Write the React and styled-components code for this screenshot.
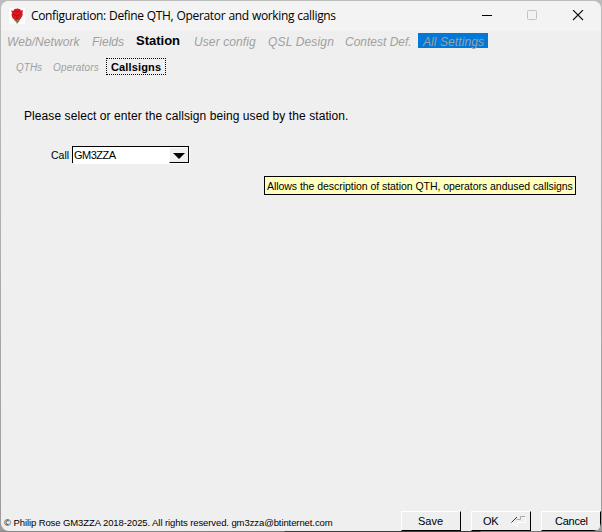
import React from "react";
import styled, { createGlobalStyle } from "styled-components";

const Global = createGlobalStyle`
  * { box-sizing: border-box; }
  html, body { margin: 0; padding: 0; overflow: hidden; background: #b4b4b4; }
`;

const Desktop = styled.div`
  width: 602px;
  height: 532px;
  padding: 1px;
  background:
    linear-gradient(90deg, #888 0 160px, #777 284px, #3c3c3c 285px 480px, #777 481px) 0 100% / 100% 1px no-repeat,
    linear-gradient(#bcbcbc 0, #b0b0b0 40%, #9b9b9b 100%);
  font-family: "Liberation Sans", Arial, sans-serif;
  color: #000;
`;

const Window = styled.main`
  width: 600px;
  height: 530px;
  display: flex;
  flex-direction: column;
  background: #efefef;
  border-radius: 8px;
  overflow: hidden;
`;

const TitleBar = styled.header`
  height: 30px;
  flex: none;
  display: flex;
  align-items: center;
  padding-left: 8px;
  background: #f3f3f3;
`;

const AppIcon = styled.svg`
  width: 16px;
  height: 16px;
  flex: none;
`;

const Title = styled.h1`
  margin: 0 0 0 6px;
  flex: 1;
  font: 400 12px/18px "Open Sans", "Noto Sans", sans-serif;
  letter-spacing: ${(p) => p.$spacing}px;
  word-spacing: 0.4px;
  white-space: nowrap;
`;

const Caption = styled.button`
  width: 45px;
  height: 30px;
  padding: 0;
  border: 0;
  background: transparent;
  display: flex;
  align-items: center;
  justify-content: center;
`;

const Captions = styled.div`
  display: flex;
  margin-right: 1px;
`;

const Tabs = styled.nav`
  display: flex;
  flex: none;
  height: ${(p) => p.$height}px;
  padding: 2px 0 0 ${(p) => p.$indent}px;
`;

const Tab = styled.button`
  flex: none;
  width: ${(p) => p.$width}px;
  height: 15px;
  padding: ${(p) => (p.$active ? 0 : 2)}px 0 0 ${(p) => p.$pad || 0}px;
  border: 0;
  background: ${(p) => (p.$selected ? "#0078d7" : "transparent")};
  color: ${(p) => (p.$active ? "#000" : "#a0a0a0")};
  font: ${(p) => (p.$active ? "normal 700" : "italic 400")} ${(p) => p.$size || 12}px/15px "Liberation Sans", Arial, sans-serif;
  letter-spacing: ${(p) => p.$spacing || 0}px;
  text-align: left;
  white-space: nowrap;
`;

const SubTab = styled(Tab)`
  height: 17px;
  padding-top: 2px;
  line-height: 15px;
  ${(p) => p.$active && "outline: 1px dotted #000; outline-offset: -1px;"}
`;

const Content = styled.section`
  flex: 1;
  padding: 26px 0 0 23px;
`;

const Prompt = styled.p`
  margin: 0;
  font-size: 12px;
  line-height: 16px;
  letter-spacing: ${(p) => p.$spacing}px;
  white-space: nowrap;
`;

const Field = styled.label`
  display: flex;
  margin: 22px 0 0 27px;
`;

const FieldName = styled.span`
  width: 21px;
  font-size: 10.5px;
  line-height: 19px;
`;

const Combo = styled.span`
  display: flex;
  width: 117px;
  height: 17px;
  border: 1px solid #000;
  border-bottom: 0;
  background: #fff;
  box-shadow: 1px 1px 0 #fff;
`;

const ComboValue = styled.span`
  flex: 1;
  padding-left: 1px;
  font-size: 11px;
  line-height: 17px;
  letter-spacing: ${(p) => p.$spacing}px;
`;

const ComboArrow = styled.span`
  width: 19px;
  height: 16px;
  display: flex;
  align-items: center;
  justify-content: center;
  padding-top: 1px;
  background: #efefef;
  border-top: 1px solid #fff;
  border-left: 1px solid #fff;
  border-bottom: 1px solid #000;
`;

const Tooltip = styled.div`
  position: absolute;
  left: 264px;
  top: 176px;
  width: 312px;
  height: 19px;
  padding-left: 2px;
  border: 1px solid #000;
  background: #ffffbf;
  font-size: 10.5px;
  line-height: 19px;
  letter-spacing: ${(p) => p.$spacing}px;
  white-space: nowrap;
`;

const Footer = styled.footer`
  flex: none;
  height: 20px;
  display: flex;
  justify-content: space-between;
`;

const Copyright = styled.span`
  padding: 5px 0 0 3px;
  font-size: 9.5px;
  line-height: 14px;
  letter-spacing: ${(p) => p.$spacing}px;
  white-space: nowrap;
`;

const Actions = styled.div`
  display: flex;
  gap: 10px;
`;

const Action = styled.button`
  width: 60px;
  height: 20px;
  padding: 0 0 0 ${(p) => p.$pad}px;
  display: flex;
  align-items: center;
  border: 0;
  border-top: 1px solid #fff;
  border-left: 1px solid #fff;
  border-right: 1px solid #000;
  border-bottom: 1px solid #000;
  background: #efefef;
  color: #000;
  font: 11px/18px "Liberation Sans", Arial, sans-serif;
  letter-spacing: ${(p) => p.$spacing || 0}px;
`;

const ReturnMark = styled.svg`
  width: 18px;
  height: 12px;
  flex: none;
  margin: 0 0 0 11px;
`;

const RoseIcon = () => (
  <AppIcon viewBox="0 0 16 16">
    <rect width="16" height="16" fill="#fff" />
    <path d="M8 11v4.5M8 14.5l2.5-2M8 13.5l-2.5-1" stroke="#55852f" strokeWidth="1.2" fill="none" />
    <path d="M2 2.5L4.5 2.7 5.5 1 8.5.5l2.5.5.7 1.5 2.3-.2-.5 2.5.2 2.5-2 3.5-2.5 1.7H7l-3.300-2L2.500 7l.5-2.500z" fill="#dc1820" />
    <path d="M5 2.8l3 1.200 3-1.500M4 6l4 2 4-2.500M8 8v3" stroke="#99101a" strokeWidth=".8" fill="none" />
    <path d="M4.5 10.5l2 1.8M11.5 10.5l-2 1.8" stroke="#68752c" strokeWidth="1" />
  </AppIcon>
);

export default function App() {
  return (
    <>
      <Global />
      <Desktop>
        <Window>
          <TitleBar>
            <RoseIcon />
            <Title $spacing={-0.34}>Configuration: Define QTH, Operator and working calligns</Title>
            <Captions>
              <Caption aria-label="Minimize">
                <svg width="12" height="12"><path d="M0 5.5h10" stroke="#000" /></svg>
              </Caption>
              <Caption aria-label="Maximize">
                <svg width="12" height="12"><rect x=".5" y=".5" width="9" height="9" rx="1" fill="none" stroke="#c3c3c3" /></svg>
              </Caption>
              <Caption aria-label="Close">
                <svg width="12" height="12"><path d="M1 0l10 10M11 0L1 10" stroke="#111" strokeWidth="1.1" /></svg>
              </Caption>
            </Captions>
          </TitleBar>
          <Tabs $height={25} $indent={6}>
            <Tab $width={85} $spacing={0.08}>Web/Network</Tab>
            <Tab $width={44}>Fields</Tab>
            <Tab $width={58} $active $size={13}>Station</Tab>
            <Tab $width={74} $spacing={0.1}>User config</Tab>
            <Tab $width={77} $spacing={0.15}>QSL Design</Tab>
            <Tab $width={73}>Contest Def.</Tab>
            <Tab $width={70} $selected $pad={5} $spacing={0.08}>All Settings</Tab>
          </Tabs>
          <Tabs $height={26} $indent={15}>
            <SubTab $width={37} $size={10}>QTHs</SubTab>
            <SubTab $width={53} $size={10} $spacing={0.15}>Operators</SubTab>
            <SubTab $width={60} $size={11} $pad={5} $active $spacing={0.15}>Callsigns</SubTab>
          </Tabs>
          <Content>
            <Prompt $spacing={0.08}>Please select or enter the callsign being used by the station.</Prompt>
            <Field>
              <FieldName>Call</FieldName>
              <Combo>
                <ComboValue $spacing={-0.5}>GM3ZZA</ComboValue>
                <ComboArrow>
                  <svg width="12" height="6"><path d="M0 0h12L6 6z" /></svg>
                </ComboArrow>
              </Combo>
            </Field>
            <Tooltip role="tooltip" $spacing={-0.045}>Allows the description of station QTH, operators andused callsigns</Tooltip>
          </Content>
          <Footer>
            <Copyright $spacing={-0.095}>© Philip Rose GM3ZZA 2018-2025.  All rights reserved. gm3zza@btinternet.com</Copyright>
            <Actions>
              <Action $pad={16}>Save</Action>
              <Action $pad={11} $spacing={-0.2}>
                OK
                <ReturnMark viewBox="0 0 18 12">
                  <path d="M1.5 7.5l5.5-5.500" stroke="#333" />
                  <path d="M6.5 4.500h4v-3h5" stroke="#aaa" fill="none" />
                  <path d="M15.5 1.500v6h-8v4L2 7.5" stroke="#fff" fill="none" />
                </ReturnMark>
              </Action>
              <Action $pad={13} $spacing={-0.25}>Cancel</Action>
            </Actions>
          </Footer>
        </Window>
      </Desktop>
    </>
  );
}
